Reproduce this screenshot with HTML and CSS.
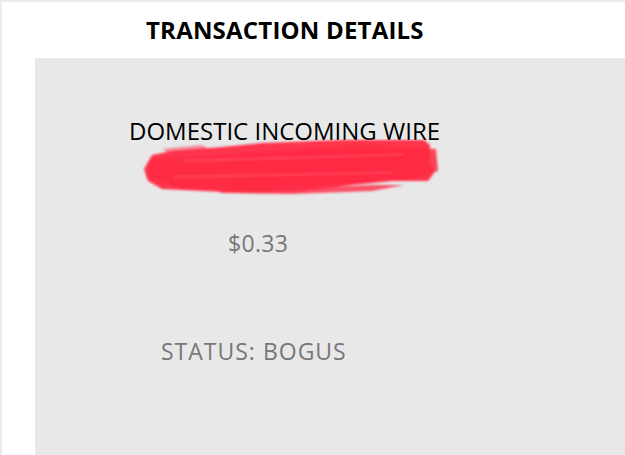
FILE: index.html
```html
<!DOCTYPE html>
<html>
<head>
<meta charset="utf-8">
<link rel="stylesheet" href="styles.css">
</head>
<body>
<div class="frame">
  <h1 class="title">TRANSACTION DETAILS</h1>
  <section class="panel">
    <div class="desc">DOMESTIC INCOMING WIRE</div>
    <div class="redact">
      <svg width="300" height="60" viewBox="0 0 300 60">
        <defs>
          <filter id="soft" x="-10%" y="-20%" width="120%" height="140%">
            <feGaussianBlur stdDeviation="1.3"/>
          </filter>
        </defs>
        <g filter="url(#soft)" fill="#ff2c45">
          <path d="M30 12 L80 8 L120 4 L200 1 L282 1 L288 6 L288 22 L292 34 L286 42 L250 42 L210 46 L160 52 L110 54 L60 52 L20 50 L6 42 L2 30 L10 16 Z" opacity="0.95"/>
          <path d="M8 20 L100 14 L220 6 L294 10 L296 32 L270 40 L180 48 L40 50 L4 38 Z" opacity="0.88"/>
          <path d="M60 46 L150 50 L230 46 L262 46 L230 52 L150 55 L80 54 Z" opacity="0.8"/>
          <path d="M20 10 L60 6 L70 12 L30 16 Z" opacity="0.5"/>
        </g>
        <g fill="#ff5a6c" opacity="0.3">
          <path d="M40 20 L260 14 L262 17 L42 24 Z"/>
          <path d="M30 36 L250 32 L252 35 L32 40 Z"/>
        </g>
      </svg>
    </div>
    <div class="amount">$0.33</div>
    <div class="status">STATUS: BOGUS</div>
  </section>
</div>
</body>
</html>
```

FILE: styles.css
```css
html, body {
  margin: 0;
  padding: 0;
  background: #ffffff;
}
body {
  width: 625px;
  height: 455px;
  overflow: hidden;
}
.frame {
  box-sizing: border-box;
  height: 455px;
  border-top: 2px solid #ececec;
  border-left: 2px solid #ececec;
  display: flex;
  flex-direction: column;
}
.title {
  margin: 12px 0 0 144px;
  font-family: "Open Sans", sans-serif;
  font-weight: 700;
  font-size: 24px;
  line-height: 32px;
  color: #000;
  letter-spacing: 0.2px;
}
.panel {
  flex: 1;
  margin: 12px 0 0 33px;
  background: #e8e8e8;
  display: flex;
  flex-direction: column;
  align-items: flex-start;
}
.desc {
  margin: 57px 0 0 94px;
  font-family: "Open Sans", sans-serif;
  font-size: 24px;
  line-height: 32px;
  color: #000;
}
.redact {
  margin: -8px 0 0 107px;
  height: 60px;
}
.redact svg { display: block; }
.amount {
  margin: 29px 0 0 193px;
  font-family: "Open Sans", sans-serif;
  font-size: 23px;
  line-height: 30px;
  letter-spacing: 0.3px;
  color: #777;
}
.status {
  margin: 78px 0 0 126px;
  font-family: "Open Sans", sans-serif;
  font-size: 23px;
  line-height: 30px;
  letter-spacing: 1px;
  color: #777;
}
```
